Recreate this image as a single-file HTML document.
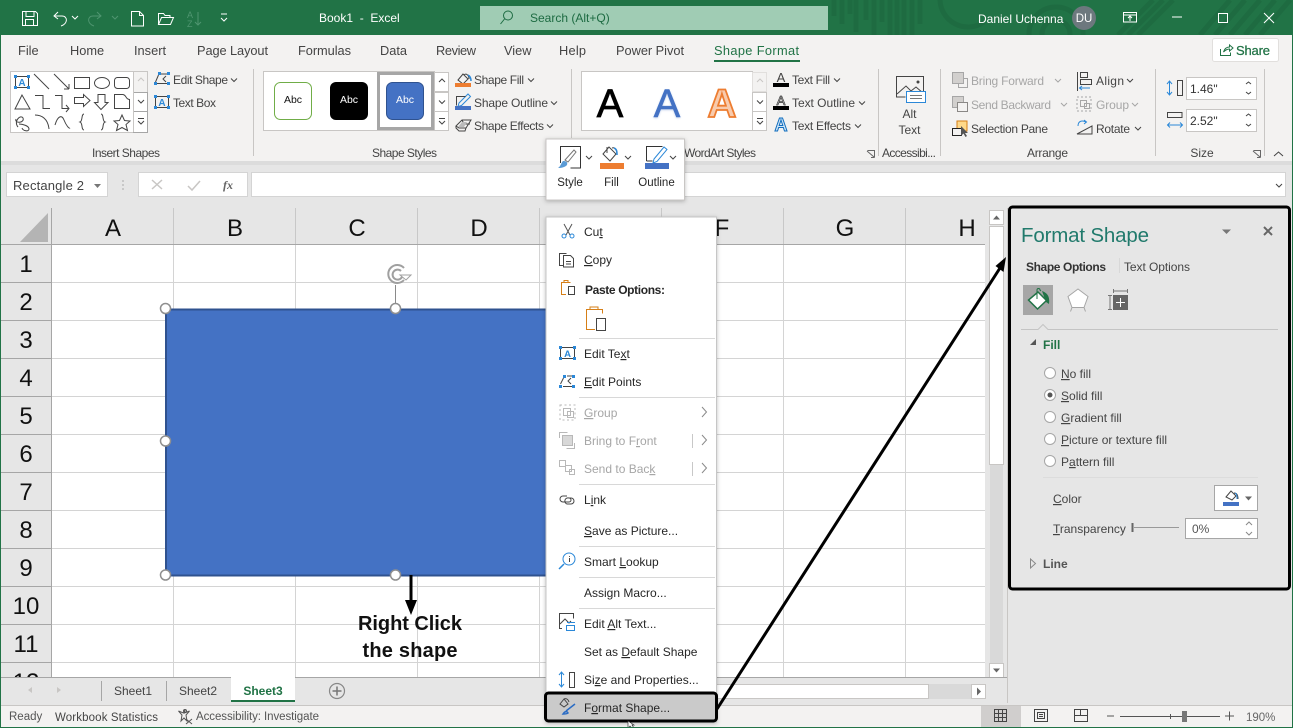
<!DOCTYPE html>
<html lang="en"><head><meta charset="utf-8"><title>Book1 - Excel</title>
<style>
html,body{margin:0;padding:0;width:1293px;height:728px;overflow:hidden;background:#e6e6e6}
svg{display:block;font-family:"Liberation Sans",sans-serif;font-size:12px;fill:#444}
.w{fill:#fff}.tab{font-size:12.8px;fill:#444}.d{fill:#a6a6a6}.m{fill:#262626}.md{fill:#a6a6a6}
.u{text-decoration:underline}.b{font-weight:bold}
.l{stroke:#d4d4d4;stroke-width:1;fill:none}
.s{fill:none;stroke:#444;stroke-width:1}
.hd{font-size:24px;fill:#111;text-anchor:middle}
.c{text-anchor:middle}
</style></head><body>
<svg width="1293" height="728" viewBox="0 0 1293 728" xmlns="http://www.w3.org/2000/svg">
<defs>
<path id="chev" d="M0 0l3 3 3-3" fill="none" stroke="#444" stroke-width="1"/>
<path id="chevd" d="M0 0l3 3 3-3" fill="none" stroke="#a6a6a6" stroke-width="1"/>
<clipPath id="gridclip"><rect x="1" y="208" width="985" height="469"/></clipPath>
<filter id="blur"><feGaussianBlur stdDeviation="1.1"/></filter>
<filter id="shd" x="-10%" y="-10%" width="120%" height="120%"><feDropShadow dx="0" dy="1" stdDeviation="2" flood-color="#000" flood-opacity=".25"/></filter>
</defs>

<rect width="1293" height="728" fill="#e6e6e6"/>

<!-- title bar -->
<rect width="1293" height="35" fill="#217346"/>
<g fill="none" stroke="#1e6b41" stroke-width="5">
<path d="M834 0v16M842 0v24M850 0v14M856 0v32M866 0v20M874 0v35M882 0v22M890 0v35M897 0v35M904 0v35M912 0v35M920 0v24"/>
<path d="M940 -2a28 28 0 0 0 44 24"/><circle cx="1056" cy="34" r="14"/><circle cx="1056" cy="34" r="27"/>
<path d="M1118 35l35-35M1128 35l35-35M1138 35l35-35M1200 35l30-35M1215 35l30-35M1230 35l30-35M1245 35l30-35M1260 35l30-35"/>
</g>
<g fill="none" stroke="#fff" stroke-width="1">
<path d="M22.500 11.500h13l2 2v12h-15zM26 11.500v5h8v-5M25.500 25.500v-6h8v6"/>
<path d="M58 12l-4 4 4 3M54 16h8c6 0 6 8-1 10"/>
<path d="M131.500 11.500h8l4 4v10.500h-12zM139.500 11.500v4h4"/>
<path d="M158.500 24.500v-11h5l1.500 2h5v2M158.500 24.500l3-7h12l-3 7z"/>
<path d="M221 14h6M221 18l3 3 3-3" stroke-width="1"/>
<path d="M72 16l3 3 3-3"/>
<path d="M1123.500 12.500h13v9.500h-13zM1123.500 15h13M1130 21v-5M1128 18l2-2 2 2"/>
<path d="M1172 17h10M1218.500 13.500h9v9h-9zM1264 13l10 10M1274 13l-10 10"/>
</g>
<g fill="none" stroke="#4f9570" stroke-width="1">
<path d="M97 12l4 4-4 3M101 16h-8c-6 0-6 8 1 10"/><path d="M112 16l3 3 3-3"/>
<path d="M198 12v13M195 22l3 3 3-3"/>
</g>
<text x="187" y="18" font-size="9" style="fill:#4f9570">A</text><text x="187" y="27" font-size="9" style="fill:#4f9570">Z</text>
<text x="319" y="22" class="w">Book1&#160; -&#160; Excel</text>
<rect x="480" y="6" width="348" height="24" fill="#a0ccb4"/>
<circle cx="508" cy="15.500" r="4.500" fill="none" stroke="#1d6b42"/><path d="M504.500 19l-4 5" stroke="#1d6b42" fill="none"/>
<text x="530" y="22" style="fill:#1d6b42">Search (Alt+Q)</text>
<text x="978" y="23" class="w">Daniel Uchenna</text>
<circle cx="1084" cy="18" r="12" fill="#6d787e"/><text x="1084" y="22" class="w c" font-size="11.500">DU</text>

<!-- ribbon -->
<rect x="0" y="35" width="1293" height="126" fill="#f3f2f1"/>
<rect x="0" y="161" width="1293" height="4" fill="#dcdcdc"/>
<text x="18" y="55" class="tab">File</text><text x="70" y="55" class="tab">Home</text><text x="134" y="55" class="tab">Insert</text><text x="197" y="55" class="tab" textLength="71">Page Layout</text><text x="298" y="55" class="tab" textLength="53">Formulas</text><text x="380" y="55" class="tab" textLength="27">Data</text><text x="436" y="55" class="tab" textLength="40">Review</text><text x="504" y="55" class="tab">View</text><text x="559" y="55" class="tab" textLength="27">Help</text><text x="616" y="55" class="tab" textLength="68">Power Pivot</text>
<text x="714" y="55" class="tab" style="fill:#217346" textLength="85">Shape Format</text>
<rect x="714" y="60" width="86" height="2" fill="#217346"/>
<rect x="1212.500" y="38.500" width="66" height="23" rx="2" fill="#fff" stroke="#e1dfdd"/>
<path d="M1220.500 49v6.500h10v-3M1223.500 52c1-3 3-5 6-5v-2l3.500 3-3.500 3v-2c-2 0-4 1-6 3z" fill="none" stroke="#217346"/>
<text x="1236" y="55" font-size="13" textLength="34" class="b" style="fill:#217346;font-weight:normal;stroke:#217346;stroke-width:.25">Share</text>

<!-- separators -->
<path d="M253.500 69v87M571.500 69v69M878.500 69v87M940.500 69v87M1155.500 69v87M1264.500 69v87" stroke="#c8c6c4"/>

<!-- insert shapes gallery -->
<rect x="10.500" y="71.500" width="137" height="61" fill="#fff" stroke="#c8c6c4"/>
<rect x="134" y="72" width="13" height="20" fill="#f3f2f1"/><rect x="133.500" y="92.500" width="14" height="19" fill="#fff" stroke="#a6a6a6"/><rect x="133.500" y="111.500" width="14" height="21" fill="#fff" stroke="#a6a6a6"/>
<path d="M133.500 72v60" stroke="#c8c6c4"/>
<path d="M138 81l3-3 3 3" fill="none" stroke="#c8c6c4"/><use href="#chev" x="138" y="100"/><path d="M138 118.500h6M138 121l3 3 3-3" fill="none" stroke="#444"/>
<g class="s">
<path d="M34 74l15 15M54 74l15 15M69 89v-5M69 89h-5"/>
<rect x="74.500" y="77.500" width="15" height="11"/><ellipse cx="102" cy="83" rx="7.500" ry="5.500"/><rect x="114.500" y="77.500" width="15" height="11" rx="3"/>
<path d="M22 95l-7 14h15zM35 95.500h8v13h7M55 95.500h7v13h7M66 105l3 3.500-3 3.500M74.500 97.500h9v-3l6.500 6-6.500 6v-3h-9zM98 94.500h7v8h3l-7 7-6.500-7h3.500zM114.500 108.500v-14h8c4 0 3 5 7 5v9z"/>
<path d="M18 127c-5-6 3-13 5-9 2 5-9 6-7 1M19 124c4 0 10 2 10 5s-6 2-7-1M35 115c7 0 13 4 14 14M55 125c3-10 7-10 9-5s5 9 6 8M84 114c-3 0-1 7-4 8 3 1 1 8 4 8M101 114c3 0 1 7 4 8-3 1-1 8-4 8M122 115l2.500 5.500 5.500.5-4 3.500 1.500 6-5.500-3-5.500 3 1.500-6-4-3.500 5.500-.5z"/>
</g>
<rect x="15.500" y="76.500" width="13" height="11" fill="none" stroke="#444"/>
<text x="22" y="86" font-size="10" class="c b" style="fill:#2b88d8">A</text>
<g fill="#2b88d8"><rect x="14" y="75" width="3" height="3"/><rect x="27" y="75" width="3" height="3"/><rect x="14" y="86" width="3" height="3"/><rect x="27" y="86" width="3" height="3"/></g>

<g fill="#2b88d8"><rect x="158" y="72" width="3" height="3"/><rect x="167" y="72" width="3" height="3"/><rect x="154" y="82" width="3" height="3"/><rect x="167" y="82" width="3" height="3"/></g>
<path d="M155.500 82l3-7M161 74h6M166 76l-3 3 3 3M157 83.500h10" fill="none" stroke="#444"/>
<text x="173" y="84" textLength="55">Edit Shape</text><use href="#chev" x="231" y="78.500"/>
<rect x="155.500" y="96.500" width="13" height="11" fill="none" stroke="#444"/>
<text x="162" y="106" font-size="10" class="c b" style="fill:#2b88d8">A</text>
<g fill="#2b88d8"><rect x="154" y="95" width="3" height="3"/><rect x="167" y="95" width="3" height="3"/><rect x="154" y="106" width="3" height="3"/><rect x="167" y="106" width="3" height="3"/></g>
<text x="173" y="107" textLength="43">Text Box</text>
<text x="92" y="157" textLength="68">Insert Shapes</text>

<!-- shape styles -->
<rect x="263.500" y="71.500" width="171" height="59" fill="#fff" stroke="#c8c6c4"/>
<rect x="274.500" y="82.500" width="37" height="37" rx="6" fill="#fff" stroke="#70ad47"/>
<text x="293" y="103" font-size="10.500" class="c" style="fill:#111">Abc</text>
<rect x="330" y="82" width="38" height="38" rx="6" fill="#000"/>
<text x="349" y="103" font-size="10.500" class="c w">Abc</text>
<rect x="378.500" y="73.500" width="54" height="55" fill="#fff" stroke="#a6a6a6" stroke-width="3"/>
<rect x="386.500" y="82.500" width="37" height="37" rx="6" fill="#4472c4" stroke="#2f528f"/>
<text x="405" y="103" font-size="10.500" class="c w">Abc</text>
<rect x="434.500" y="72.500" width="14" height="19" fill="#fff" stroke="#c8c6c4"/><rect x="434.500" y="92.500" width="14" height="19" fill="#fff" stroke="#c8c6c4"/><rect x="434.500" y="111.500" width="14" height="19" fill="#fff" stroke="#c8c6c4"/>
<path d="M439 82l3-3 3 3" fill="none" stroke="#444"/><use href="#chev" x="439" y="100.500"/><path d="M439 118.500h6M439 121l3 3 3-3" fill="none" stroke="#444"/>

<path d="M458 80l5-6 5 5-5 5zM464 75c2-2 5 0 5 4" fill="none" stroke="#444"/><path d="M468 75c2 1 3 3 3 6" fill="none" stroke="#2b88d8" stroke-width="1.500"/>
<rect x="455" y="83" width="16" height="4" fill="#ed7d31"/>
<path d="M459 103l9-9 2.500 2.500-9 9-3.500 1z" fill="none" stroke="#2b88d8"/><path d="M456.500 105.500v-9h9" fill="none" stroke="#444"/>
<rect x="455" y="106" width="16" height="4" fill="#4472c4"/>
<path d="M456 126l6-6h9l-5 8h-7zM456 126v2l3 3h6l1-3M462 120l2 4h6" fill="none" stroke="#444"/><path d="M458 127l4-5h5l-3 5z" fill="#bbb"/>
<text x="474" y="84" textLength="50">Shape Fill</text><use href="#chev" x="528" y="78.500"/>
<text x="474" y="107" textLength="74">Shape Outline</text><use href="#chev" x="551" y="101.500"/>
<text x="474" y="130" textLength="70">Shape Effects</text><use href="#chev" x="547" y="124.500"/>
<text x="372" y="157" textLength="65">Shape Styles</text>

<!-- wordart -->
<rect x="581.500" y="71.500" width="171" height="59" fill="#fff" stroke="#c8c6c4"/>
<text x="610" y="117" font-size="40" class="c" style="fill:#000;stroke:#000;stroke-width:.7">A</text>
<text x="667" y="118" font-size="40" class="c" style="fill:#4472c4;opacity:.35" filter="url(#blur)">A</text>
<text x="667" y="117" font-size="40" class="c" style="fill:#4472c4;stroke:#4472c4;stroke-width:.5">A</text>
<text x="722" y="117" font-size="40" class="c b" style="fill:#f8cbad;stroke:#ed7d31;stroke-width:1.800">A</text>
<rect x="752.500" y="72.500" width="14" height="19" fill="#f3f2f1" stroke="#e1dfdd"/><rect x="752.500" y="92.500" width="14" height="19" fill="#fff" stroke="#c8c6c4"/><rect x="752.500" y="111.500" width="14" height="19" fill="#fff" stroke="#c8c6c4"/>
<path d="M757 82l3-3 3 3" fill="none" stroke="#c8c6c4"/><use href="#chev" x="757" y="100.500"/><path d="M757 118.500h6M757 121l3 3 3-3" fill="none" stroke="#444"/>
<text x="781" y="82" font-size="13" class="c" style="fill:#444">A</text><rect x="773" y="83" width="16" height="4" fill="#000"/>
<text x="781" y="105" font-size="13" class="c" style="fill:#fff;stroke:#444;stroke-width:.8">A</text><rect x="773" y="106" width="16" height="4" fill="#000"/>
<text x="781" y="131" font-size="18" class="c b" style="fill:#cfe4f7;stroke:#106ebe;stroke-width:1">A</text>
<text x="792" y="84" textLength="38">Text Fill</text><use href="#chev" x="834" y="78.500"/>
<text x="792" y="107" textLength="63">Text Outline</text><use href="#chev" x="859" y="101.500"/>
<text x="792" y="130" textLength="59">Text Effects</text><use href="#chev" x="855" y="124.500"/>
<text x="684" y="157" textLength="72">WordArt Styles</text>
<path d="M867.500 150.500h7v7M867 151l7 6M871 157.500h3.500" fill="none" stroke="#666"/>

<!-- alt text -->
<path d="M923.500 96v-19.500h-27v20.500h9M897 94l9-8 5 5 5-4 7 6" fill="none" stroke="#444"/><circle cx="918" cy="82" r="1.500" fill="#444"/>
<rect x="906.500" y="91.500" width="19" height="11" fill="#fff" stroke="#2b88d8"/><path d="M910 95.500h12M910 98.500h12" stroke="#777"/>
<text x="909.500" y="118" class="c">Alt</text><text x="909.500" y="134" class="c">Text</text>
<text x="882" y="157" textLength="54">Accessibi...</text>

<!-- arrange -->
<g fill="none" stroke="#a6a6a6"><rect x="952.500" y="72.500" width="11" height="11" fill="#d2d0ce"/><path d="M964 78.500h3.500v9h-9V84"/>
<rect x="952.500" y="96.500" width="11" height="11" fill="#d2d0ce"/><rect x="957.500" y="102.500" width="10" height="9" fill="#f3f2f1" stroke="#8a8886"/></g>
<text x="971" y="85" class="d" textLength="73">Bring Forward</text><use href="#chevd" x="1055" y="79"/>
<text x="971" y="109" class="d" textLength="80">Send Backward</text><use href="#chevd" x="1061" y="103"/>
<rect x="957" y="121" width="10" height="10" fill="#ffd98a" stroke="#d67f17"/><rect x="952.500" y="128.500" width="9" height="7" fill="#f3f2f1" stroke="#222"/>
<path d="M961 126v10l2.500-2.500 2 3.500 1.500-1-2-3h3z" fill="#555"/>
<text x="971" y="133" textLength="77">Selection Pane</text>
<path d="M1077.500 72v19M1080.500 72.500h7v5h-7zM1080.500 79.500h11v5h-11z" fill="none" stroke="#444"/><path d="M1090 88h-10M1082 86l-2.500 2 2.500 2" fill="none" stroke="#2b88d8"/>
<text x="1096" y="85" textLength="28">Align</text><use href="#chev" x="1127" y="79"/>
<path d="M1077 97h14v14h-14z" fill="none" stroke="#a6a6a6" stroke-dasharray="2 2"/><rect x="1080.500" y="100.500" width="6" height="6" fill="none" stroke="#a6a6a6"/><rect x="1084.500" y="103.500" width="5" height="5" fill="none" stroke="#a6a6a6"/>
<text x="1096" y="109" class="d" textLength="33">Group</text><use href="#chevd" x="1132" y="103"/>
<path d="M1077 134l15-8v8z" fill="none" stroke="#444"/><path d="M1078 126c0-5 4-6 8-4M1084 120l2.500 2-2.500 2" fill="none" stroke="#2b88d8"/>
<text x="1096" y="133" textLength="34">Rotate</text><use href="#chev" x="1135" y="127"/>
<text x="1027" y="157" textLength="41">Arrange</text>

<!-- size -->
<path d="M1169.500 81v14M1167 84l2.500-3 2.500 3M1167 92l2.500 3 2.500-3" fill="none" stroke="#2b88d8"/>
<rect x="1177.500" y="80.500" width="5" height="15" fill="none" stroke="#444"/>
<rect x="1186.500" y="77.500" width="70" height="22" fill="#fff" stroke="#c8c6c4"/><text x="1190" y="93" style="fill:#333">1.46"</text>
<path d="M1246 84l2.500-2 2.500 2M1246 92l2.500 2 2.500-2" fill="none" stroke="#444"/>
<path d="M1167.500 112.500h14.500v5h-14.500z" fill="none" stroke="#444"/><path d="M1167.500 125h15M1170 122.500l-2.500 2.500 2.500 2.500M1180 122.500l2.500 2.500-2.500 2.500" fill="none" stroke="#2b88d8"/>
<rect x="1186.500" y="109.500" width="70" height="22" fill="#fff" stroke="#c8c6c4"/><text x="1190" y="125" style="fill:#333">2.52"</text>
<path d="M1246 116l2.500-2 2.500 2M1246 124l2.500 2 2.500-2" fill="none" stroke="#444"/>
<text x="1202" y="157" class="c">Size</text>
<path d="M1253.500 150.500h7v7M1253 151l7 6M1257 157.500h3.500" fill="none" stroke="#666"/>
<path d="M1274 156l4.500-4 4.500 4" fill="none" stroke="#444"/>

<!-- formula bar -->
<rect x="6.500" y="172.500" width="101" height="24" fill="#fff" stroke="#d4d4d4"/>
<text x="13" y="190" font-size="13" textLength="71" style="fill:#444">Rectangle 2</text>
<path d="M94 184h7l-3.500 4z" fill="#777"/>
<path d="M123 180v2M123 184v2M123 188v2" stroke="#aaa"/>
<rect x="138.500" y="172.500" width="109" height="24" fill="#fff" stroke="#d4d4d4"/>
<path d="M152 180l10 9M162 180l-10 9M188 186l4 4 8-9" fill="none" stroke="#c8c6c4" stroke-width="1.500"/>
<text x="223" y="189" font-size="12" font-style="italic" font-family="Liberation Serif" style="fill:#666;font-weight:bold">fx</text>
<rect x="251.500" y="172.500" width="1034" height="24" fill="#fff" stroke="#d4d4d4"/>
<use href="#chev" x="1276" y="184"/>

<!-- grid -->
<g clip-path="url(#gridclip)">
<rect x="1" y="208" width="51" height="469" fill="#e6e6e6"/>
<rect x="52" y="244" width="933" height="433" fill="#fff"/>
<path class="l" d="M173.500 244v433M295.500 244v433M417.500 244v433M539.500 244v433M661.500 244v433M783.500 244v433M905.500 244v433"/>
<path class="l" d="M52 282.500h933M52 320.500h933M52 358.500h933M52 396.500h933M52 434.500h933M52 472.500h933M52 510.500h933M52 548.500h933M52 586.500h933M52 624.500h933M52 662.500h933"/>
<path d="M1 244.500h984M51.500 208v469" stroke="#a6a6a6"/>
<path d="M173.500 208v36M295.500 208v36M417.500 208v36M539.500 208v36M661.500 208v36M783.500 208v36M905.500 208v36" stroke="#c8c8c8"/>
<path d="M1 282.500h50M1 320.500h50M1 358.500h50M1 396.500h50M1 434.500h50M1 472.500h50M1 510.500h50M1 548.500h50M1 586.500h50M1 624.500h50M1 662.500h50" stroke="#a6a6a6"/>
<path d="M48 213v29H20z" fill="#b4b4b4"/>
<text x="113" y="236" class="hd">A</text><text x="235" y="236" class="hd">B</text><text x="357" y="236" class="hd">C</text><text x="479" y="236" class="hd">D</text><text x="722" y="236" class="hd">F</text><text x="845" y="236" class="hd">G</text><text x="967" y="236" class="hd">H</text>
<text x="26" y="272" class="hd">1</text><text x="26" y="310" class="hd">2</text><text x="26" y="348" class="hd">3</text><text x="26" y="386" class="hd">4</text><text x="26" y="424" class="hd">5</text><text x="26" y="462" class="hd">6</text><text x="26" y="500" class="hd">7</text><text x="26" y="538" class="hd">8</text><text x="26" y="576" class="hd">9</text><text x="26" y="614" class="hd">10</text><text x="26" y="652" class="hd">11</text><text x="26" y="690" class="hd">12</text>
</g>

<!-- shape -->
<rect x="166" y="309.500" width="384" height="266" fill="#4472c4" stroke="#2f528f" stroke-width="2"/>
<path d="M395.500 285v24" stroke="#8a8a8a"/>
<path d="M404 268a9 9 0 1 0 0 12" fill="none" stroke="#a0a0a0" stroke-width="2"/><path d="M402 277a5 5 0 1 1-1-6" fill="none" stroke="#a0a0a0" stroke-width="2"/><path d="M400 275h11l-5 5z" fill="#fff" stroke="#a0a0a0"/>
<g fill="#fff" stroke="#8f8f8f" stroke-width="1.500"><circle cx="165.500" cy="308.500" r="5"/><circle cx="395.500" cy="308.500" r="5"/><circle cx="165.500" cy="441" r="5"/><circle cx="165.500" cy="575" r="5"/><circle cx="395.500" cy="575" r="5"/></g>
<path d="M411 575v30" stroke="#000" stroke-width="3"/><path d="M405 600l6 15 6-15z" fill="#000"/>
<text x="410" y="630" font-size="20" class="c b" textLength="104" style="fill:#111">Right Click</text>
<text x="410" y="657" font-size="20" class="c b" textLength="95" style="fill:#111">the shape</text>

<!-- vertical scrollbar -->
<rect x="986" y="208" width="21" height="469" fill="#e6e6e6"/>
<rect x="989.500" y="210.500" width="14" height="14" fill="#fff" stroke="#c8c6c4"/><path d="M993 219.500l3.500-4 3.500 4z" fill="#666"/>
<rect x="989.500" y="226.500" width="14" height="238" fill="#fff" stroke="#c8c6c4"/>
<rect x="990" y="465" width="13" height="198" fill="#d9d9d9"/>
<rect x="989.500" y="663.500" width="14" height="14" fill="#fff" stroke="#c8c6c4"/><path d="M993 668.500l3.500 4 3.500-4z" fill="#666"/>
<path d="M1007.500 208v495" stroke="#c8c6c4"/>

<!-- horizontal scrollbar / sheet tabs -->
<rect x="1" y="677" width="1006" height="28" fill="#e6e6e6"/>
<path d="M1 677.500h231M295 677.500h712" stroke="#a6a6a6"/>
<path d="M32 687v6l-4-3zM57 687v6l4-3z" fill="#c8c6c4"/>
<path d="M101.500 681v20M166.500 681v20" stroke="#a6a6a6"/>
<text x="114" y="695">Sheet1</text><text x="179" y="695">Sheet2</text>
<rect x="231" y="677" width="64" height="23" fill="#fff"/>
<rect x="231" y="700" width="64" height="2" fill="#217346"/>
<text x="263" y="695" class="b c" style="fill:#217346">Sheet3</text>
<circle cx="337" cy="691" r="7.500" fill="none" stroke="#888" stroke-width="1.200"/><path d="M337 686.500v9M332.500 691h9" stroke="#777" stroke-width="1.500"/>
<rect x="640.500" y="684.500" width="288" height="14" fill="#fff" stroke="#c8c6c4"/>
<rect x="929" y="684" width="42" height="15" fill="#d9d9d9"/>
<rect x="971.500" y="684.500" width="14" height="14" fill="#fff" stroke="#c8c6c4"/><path d="M977 687.500l4 4-4 4z" fill="#666"/>

<!-- status bar -->
<rect x="1" y="706" width="1291" height="21" fill="#f3f2f1"/>
<path d="M0 705.500h1293" stroke="#c8c6c4"/>
<text x="9" y="720" font-size="11.500" style="fill:#555">Ready</text>
<text x="55" y="721" font-size="11.500" textLength="103" style="fill:#444">Workbook Statistics</text>
<path d="M185 710l-1.500 3-5-2 3.500 4-1 6 3-3 3 3-1-6 3.500-4-5 2zM186 719l6 5M192 719l-6 5" fill="none" stroke="#555"/><circle cx="185" cy="711" r="1.500" fill="none" stroke="#555"/>
<text x="196" y="720" font-size="11.500" textLength="123" style="fill:#555">Accessibility: Investigate</text>
<rect x="981" y="706" width="40" height="21" fill="#d0cecd"/>
<path d="M994.500 709.500h12v12h-12zM998.500 709.500v12M1002.500 709.500v12M994.500 713.500h12M994.500 717.500h12" fill="none" stroke="#444"/>
<path d="M1034.500 709.500h13v12h-13zM1037.500 712.500h7v6h-7zM1039 714.500h4M1039 716.500h4" fill="none" stroke="#444"/>
<path d="M1074.500 709.500h13v12h-13zM1080.500 709.500v6h-6M1080.500 715.500h7" fill="none" stroke="#444"/>
<path d="M1107 716h7M1120 716.500h100M1170.500 714v5M1225 716h9M1229.500 711.500v9" stroke="#555" fill="none"/>
<rect x="1182" y="711" width="5" height="11" fill="#777"/>
<text x="1246" y="721" font-size="11.500" style="fill:#666">190%</text>

<!-- mini toolbar -->
<rect x="546" y="139" width="138.500" height="61" fill="#fff" stroke="#c8c6c4" filter="url(#shd)"/>
<path d="M560.500 163v-16.500h20v21.500h-10" fill="none" stroke="#333"/>
<path d="M565 160l9-10 2 2-8 10z" fill="none" stroke="#777"/><path d="M563 161c3 0 5 1 4 4-2 2-5 3-9 3 3-2 3-5 5-7z" fill="#5b9bd5"/><use href="#chev" x="586" y="156"/>
<path d="M603 154l6-7 7 7-6 7zM607 147v6M612 148c3-1 5 2 5 7" fill="none" stroke="#444"/><path d="M614 148c3 1 3 4 3 7" fill="none" stroke="#2b88d8" stroke-width="1.500"/>
<rect x="600" y="163" width="24" height="6" fill="#ed7d31"/><use href="#chev" x="625" y="156"/>
<path d="M646.500 161v-14.500h16M646.500 161h6" fill="none" stroke="#333"/><path d="M654 159l10-12 3 2.500-10 12-4 1.500z" fill="none" stroke="#2b88d8"/>
<rect x="645" y="163" width="24" height="6" fill="#4472c4"/><use href="#chev" x="670" y="156"/>
<text x="570" y="186" class="c m" font-size="11.500">Style</text><text x="611.500" y="186" class="c m" font-size="11.500">Fill</text><text x="656.500" y="186" class="c m" font-size="11.500">Outline</text>

<!-- context menu -->
<rect x="546" y="217" width="170.500" height="505" fill="#fff" stroke="#c6c6c6" filter="url(#shd)"/>
<path stroke="#d8d8d8" d="M579 338.500h136M579 397.500h136M579 484.500h136M579 546.500h136M579 577.500h136M579 608.500h136"/>
<text x="584" y="236" class="m">Cu<tspan class="u">t</tspan></text>
<text x="584" y="264" class="m"><tspan class="u">C</tspan>opy</text>
<text x="585" y="294" class="m b" textLength="80">Paste Options:</text>
<text x="584" y="358" class="m">Edit Te<tspan class="u">x</tspan>t</text>
<text x="584" y="386" class="m"><tspan class="u">E</tspan>dit Points</text>
<text x="584" y="417" class="md"><tspan class="u">G</tspan>roup</text>
<text x="584" y="445" class="md">Bring to F<tspan class="u">r</tspan>ont</text>
<text x="584" y="473" class="md">Send to Bac<tspan class="u">k</tspan></text>
<text x="584" y="504" class="m">L<tspan class="u">i</tspan>nk</text>
<text x="584" y="535" class="m"><tspan class="u">S</tspan>ave as Picture...</text>
<text x="584" y="566" class="m">Smart <tspan class="u">L</tspan>ookup</text>
<text x="584" y="597" class="m">Assi<tspan class="u">g</tspan>n Macro...</text>
<text x="584" y="628" class="m">Edit <tspan class="u">A</tspan>lt Text...</text>
<text x="584" y="656" class="m">Set as <tspan class="u">D</tspan>efault Shape</text>
<text x="584" y="684" class="m">Si<tspan class="u">z</tspan>e and Properties...</text>
<!-- menu icons -->
<path d="M564 224l6 11M572 224l-6 11" stroke="#555" fill="none"/><circle cx="564" cy="236" r="2" fill="none" stroke="#2b88d8"/><circle cx="572" cy="236" r="2" fill="none" stroke="#2b88d8"/>
<path d="M563.500 265.500h-4v-12h7M563.500 255.500h7l3 3v8.500h-10zM566 261.500h5M566 264h5" fill="none" stroke="#444"/>
<path d="M566 294.500h-4.500v-12h9M564 282.500v-2h4v2" fill="none" stroke="#d67f17"/><rect x="568.500" y="286.500" width="6" height="8" fill="#fff" stroke="#444"/>
<path d="M595 329.500h-8.500v-20h16v4M590 309.500v-2.500h8v2.500" fill="none" stroke="#d67f17"/><rect x="596.500" y="318.500" width="9" height="12" fill="#fff" stroke="#444"/>
<rect x="560.500" y="347.500" width="14" height="11" fill="none" stroke="#444"/><text x="567.500" y="357" font-size="9.500" class="c b" style="fill:#2b88d8">A</text>
<g fill="#2b88d8"><rect x="559" y="346" width="3" height="3"/><rect x="573" y="346" width="3" height="3"/><rect x="559" y="357" width="3" height="3"/><rect x="573" y="357" width="3" height="3"/></g>
<g fill="#2b88d8"><rect x="563" y="375" width="3" height="3"/><rect x="572" y="375" width="3" height="3"/><rect x="559" y="385" width="3" height="3"/><rect x="572" y="385" width="3" height="3"/></g>
<path d="M560.500 384l3-6M567 376h5M571 378l-3 3 3 3M563 386.500h9" fill="none" stroke="#444"/>
<g fill="none" stroke="#b8b8b8"><path d="M560 405h15v15h-15z" stroke-dasharray="2 2.500"/><rect x="563.500" y="408.500" width="7" height="7"/><rect x="567.500" y="411.500" width="6" height="6"/>
<path d="M559.500 438v-5.500h8M574.500 443v5.500h-8"/><rect x="562.500" y="435.500" width="10" height="10" fill="#d8d8d8"/>
<rect x="559.500" y="460.500" width="6" height="6"/><rect x="565.500" y="465.500" width="6" height="6"/><rect x="569.500" y="469.500" width="5" height="5"/></g>
<path stroke="#c8c8c8" d="M692.500 434v14M692.500 462v14"/>
<path d="M702 407l4.500 5-4.500 5M702 435l4.500 5-4.500 5M702 463l4.500 5-4.500 5" fill="none" stroke="#8a8a8a"/>
<path d="M567 496h-4a3 3 0 0 0 0 6h6a2 2 0 0 0 0-4M567 504h4a3 3 0 0 0 3-3 3 3 0 0 0-3-3h-2a3 3 0 0 0-2 6" fill="none" stroke="#444"/>
<circle cx="569" cy="559" r="6" fill="none" stroke="#2b88d8"/><path d="M564 564l-5 5" stroke="#2b88d8" stroke-width="1.500"/><path d="M569.500 556v.9M569.500 558v4" stroke="#444"/>
<path d="M562 628.500h-2.500v-15h14v5M560 624l5-5 4 4 2-2" fill="none" stroke="#444"/><rect x="566.500" y="625.500" width="8" height="5" fill="#fff" stroke="#2b88d8"/><path d="M567 622.500h8" stroke="#2b88d8"/>
<path d="M561.500 672v15M559 675l2.500-3 2.500 3M559 684l2.500 3 2.500-3" fill="none" stroke="#2b88d8"/><rect x="569.500" y="672.500" width="5" height="15" fill="none" stroke="#444"/>

<!-- format shape highlighted item -->
<rect x="545.500" y="693" width="171" height="28" rx="3" fill="#cacaca" stroke="#000" stroke-width="3"/>
<text x="584" y="712" class="m">F<tspan class="u">o</tspan>rmat Shape...</text>
<path d="M560 704l4-5 4 5-4 3zM564 699c2-1 4 0 5 3" fill="none" stroke="#444"/><path d="M566 711l9-7M563 714c2-3 4-3 5-1-1 1-3 1-5 1z" fill="none" stroke="#2b6cc4" stroke-width="1.500"/>
<path d="M628 721v7l2-2 2 2h2l-2-3h2z" fill="#fff" stroke="#333" stroke-width=".7"/>

<!-- big arrow -->
<path d="M717 709L1000 268" stroke="#000" stroke-width="3" fill="none"/>
<path d="M1006 257l-2.500 15-8-6z" fill="#000"/>

<!-- format shape pane -->
<rect x="1009.500" y="207" width="280" height="382" rx="3" fill="#e6e6e6" stroke="#000" stroke-width="3"/>
<text x="1021" y="242" font-size="20.500" textLength="128" style="fill:#217a6c">Format Shape</text>
<path d="M1222 229.500h9l-4.500 4.500z" fill="#777"/>
<path d="M1264 227l8 8M1272 227l-8 8" stroke="#666" stroke-width="2"/>
<text x="1026" y="271" class="b" textLength="80" style="fill:#333">Shape Options</text>
<path d="M1119.500 258v15" stroke="#d8d8d8"/>
<text x="1124" y="271" textLength="66" style="fill:#444">Text Options</text>
<rect x="1023" y="285" width="30" height="30" fill="#a6a6a6"/>
<path d="M1038 292l8.500 8.500-9 8.500-9-9z" fill="#fff" stroke="#217346" stroke-width="1.500"/><path d="M1037 299v-9c0-2 3-2 3 0l1 1" fill="none" stroke="#217346"/><path d="M1042 291c5 2 8 5 7 13l-3-2" fill="#217346"/>
<path d="M1078 289l10 7.500-4 11h-12l-4-11z" fill="#fff" stroke="#a6a6a6"/><path d="M1072 307.500h12l1.500 4M1072 307.500l-1.500 4" fill="none" stroke="#a6a6a6"/>
<path d="M1113.500 291h14M1113.500 289v4M1127.500 289v4M1108 295.500h4M1108 309.500h4M1110 295.500v14" fill="none" stroke="#777"/>
<rect x="1113" y="295" width="15" height="15" fill="#666"/><path d="M1120.500 298v9M1116 302.500h9" stroke="#fff"/>
<path d="M1021 329.500h17l5-5 5 5h230" fill="none" stroke="#c4c4c4"/>
<path d="M1036 339v6h-6z" fill="#555"/>
<text x="1043" y="349" class="b" style="fill:#217346">Fill</text>
<g fill="#fff" stroke="#a6a6a6"><circle cx="1050" cy="373" r="5.500"/><circle cx="1050" cy="395" r="5.500"/><circle cx="1050" cy="417" r="5.500"/><circle cx="1050" cy="439" r="5.500"/><circle cx="1050" cy="461" r="5.500"/></g>
<circle cx="1050" cy="395" r="2.500" fill="#555"/>
<text x="1061" y="378"><tspan class="u">N</tspan>o fill</text>
<text x="1061" y="400"><tspan class="u">S</tspan>olid fill</text>
<text x="1061" y="422"><tspan class="u">G</tspan>radient fill</text>
<text x="1061" y="444"><tspan class="u">P</tspan>icture or texture fill</text>
<text x="1061" y="466">P<tspan class="u">a</tspan>ttern fill</text>
<path d="M1043 477.500h215" stroke="#dcdcdc"/>
<text x="1053" y="503"><tspan class="u">C</tspan>olor</text>
<rect x="1214.500" y="485.500" width="43" height="25" fill="#fff" stroke="#a6a6a6"/>
<path d="M1226 497l5-6 5 5-4 4zM1234 493c3 0 4 2 4 6" fill="none" stroke="#444"/><path d="M1235 493c2 1 2 3 2 6" fill="none" stroke="#2b88d8"/>
<rect x="1223" y="502" width="16" height="4" fill="#4472c4"/>
<path d="M1245 496.500h7l-3.500 4z" fill="#666"/>
<text x="1053" y="533"><tspan class="u">T</tspan>ransparency</text>
<path d="M1132.500 523v9" stroke="#666" stroke-width="2"/><path d="M1134 527.500h45" stroke="#999"/>
<rect x="1185.500" y="518.500" width="72" height="20" fill="#fff" stroke="#a6a6a6"/>
<text x="1192" y="533" style="fill:#555">0%</text>
<path d="M1246 525l3-3 3 3M1246 532l3 3 3-3" fill="none" stroke="#888"/>
<path d="M1030.500 559l5 4.500-5 4.500z" fill="none" stroke="#888"/>
<text x="1043" y="568" class="b" style="fill:#555">Line</text>

<!-- window frame -->
<rect x="0" y="35" width="1" height="693" fill="#217346"/><rect x="1292" y="35" width="1" height="693" fill="#217346"/><rect x="0" y="727" width="1293" height="1" fill="#217346"/>
</svg>
</body></html>
